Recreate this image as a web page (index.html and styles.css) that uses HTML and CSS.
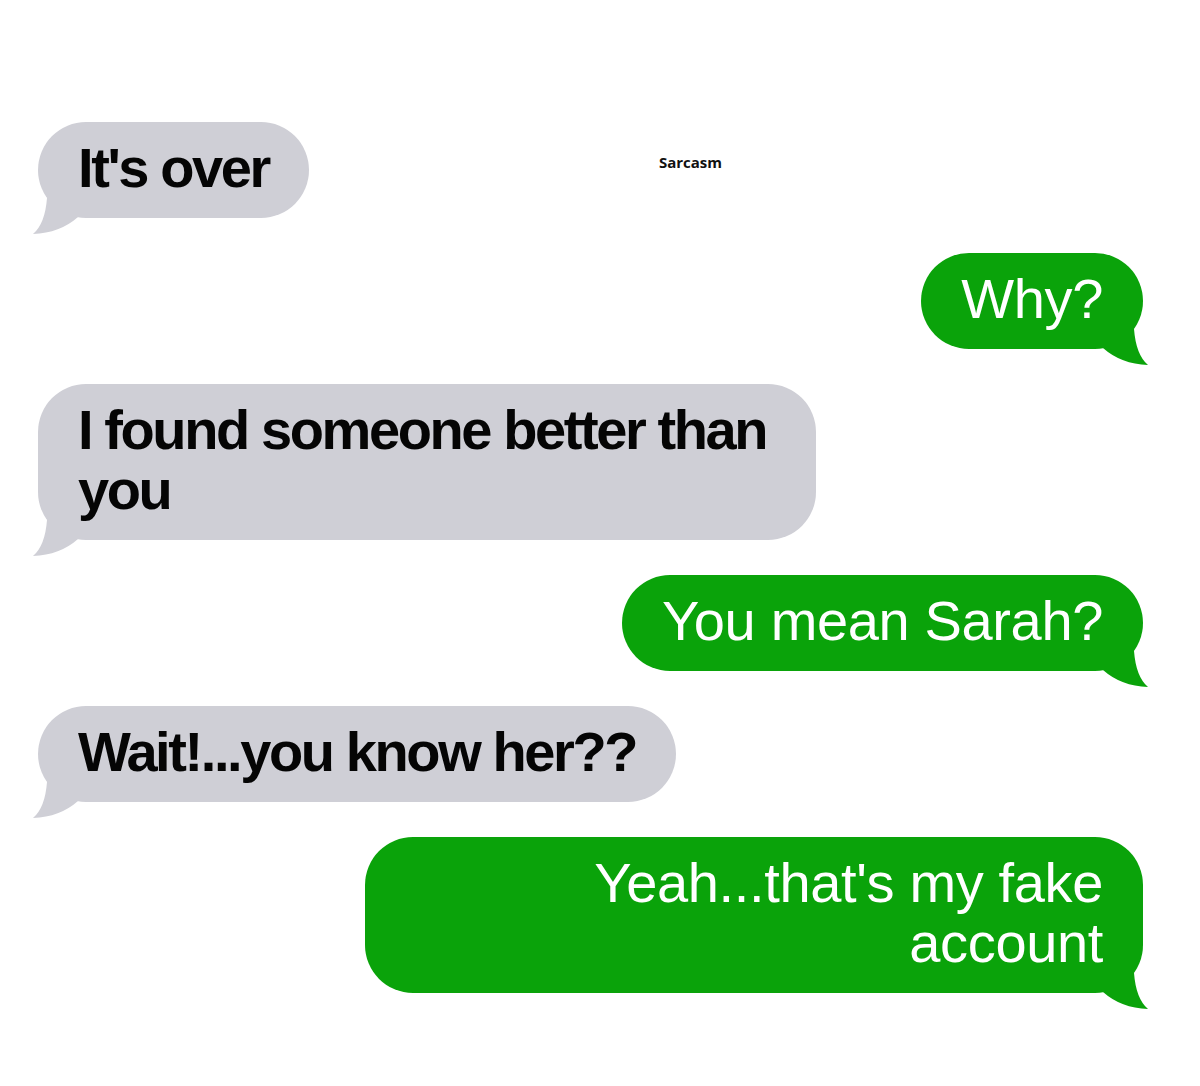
FILE: index.html
```html
<!DOCTYPE html>
<html lang="en">
<head>
<meta charset="utf-8">
<title>Sarcasm</title>
<link rel="stylesheet" href="styles.css">
</head>
<body>
<main class="chat">
  <div class="row row-in">
    <div class="bubble bubble-in">It's over
      <svg class="tail tail-in" viewBox="0 0 52 40" width="52" height="40"><path d="M6 0 L37 0 Q39 26 51 36 Q24 35 6 19 Z"/></svg>
    </div>
    <div class="caption">Sarcasm</div>
  </div>
  <div class="row row-out">
    <div class="bubble bubble-out">Why?
      <svg class="tail tail-out" viewBox="0 0 52 40" width="52" height="40"><path d="M6 0 L37 0 Q39 26 51 36 Q24 35 6 19 Z"/></svg>
    </div>
  </div>
  <div class="row row-in">
    <div class="bubble bubble-in">I found someone better than you
      <svg class="tail tail-in" viewBox="0 0 52 40" width="52" height="40"><path d="M6 0 L37 0 Q39 26 51 36 Q24 35 6 19 Z"/></svg>
    </div>
  </div>
  <div class="row row-out">
    <div class="bubble bubble-out">You mean Sarah?
      <svg class="tail tail-out" viewBox="0 0 52 40" width="52" height="40"><path d="M6 0 L37 0 Q39 26 51 36 Q24 35 6 19 Z"/></svg>
    </div>
  </div>
  <div class="row row-in">
    <div class="bubble bubble-in">Wait!...you know her??
      <svg class="tail tail-in" viewBox="0 0 52 40" width="52" height="40"><path d="M6 0 L37 0 Q39 26 51 36 Q24 35 6 19 Z"/></svg>
    </div>
  </div>
  <div class="row row-out">
    <div class="bubble bubble-out">Yeah...that's my fake account
      <svg class="tail tail-out" viewBox="0 0 52 40" width="52" height="40"><path d="M6 0 L37 0 Q39 26 51 36 Q24 35 6 19 Z"/></svg>
    </div>
  </div>
</main>
</body>
</html>
```
FILE: styles.css
```css
html, body {
  margin: 0;
  padding: 0;
  background: #ffffff;
}

body {
  width: 1200px;
  height: 1086px;
  overflow: hidden;
  font-family: "Liberation Sans", Arial, sans-serif;
}

.chat {
  display: flex;
  flex-direction: column;
  gap: 35px;
  padding: 122px 57px 0 38px;
}

.row {
  display: flex;
  align-items: flex-start;
}

.row-in {
  justify-content: flex-start;
}

.row-out {
  justify-content: flex-end;
}

.bubble {
  position: relative;
  max-width: 778px;
  box-sizing: border-box;
  padding: 16px 40px 20px 40px;
  border-radius: 48px;
  font-size: 56px;
  line-height: 60px;
}

.bubble-in {
  background: #cfcfd6;
  color: #050505;
  font-weight: 700;
  letter-spacing: -2.4px;
  text-align: left;
}

.bubble-out {
  background: #0aa30a;
  color: #ffffff;
  font-weight: 400;
  letter-spacing: -0.35px;
  text-align: right;
}

.tail {
  position: absolute;
  bottom: -20px;
  display: block;
}

.tail-out {
  right: -6px;
}

.tail-out path {
  fill: #0aa30a;
}

.tail-in {
  left: -6px;
  transform: scaleX(-1);
}

.tail-in path {
  fill: #cfcfd6;
}

.caption {
  margin-left: 350px;
  margin-top: 30px;
  font-family: "Open Sans", "Liberation Sans", sans-serif;
  font-weight: 700;
  font-size: 15px;
  line-height: 20px;
  color: #111111;
}
```
